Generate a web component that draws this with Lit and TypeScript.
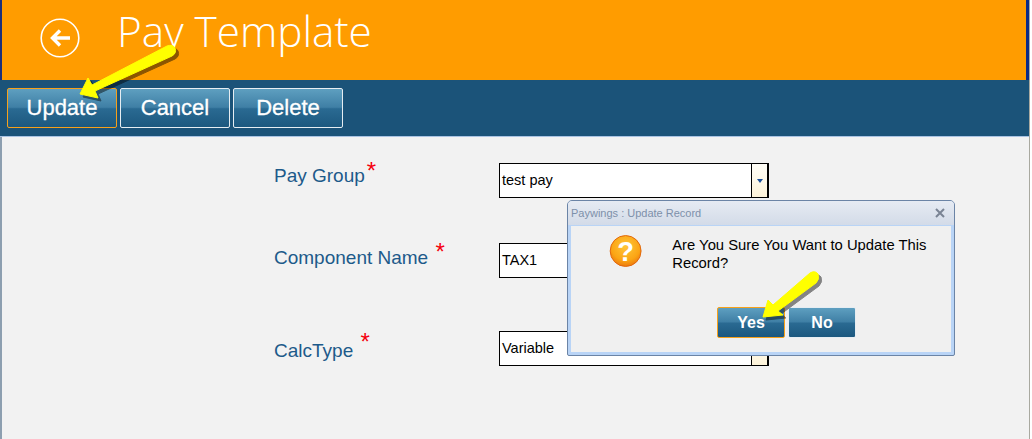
import { LitElement, css, html, svg } from 'lit';
import { customElement } from 'lit/decorators.js';

const arrow = (d: string) => svg`
  <path d=${d} transform="translate(3 3)" fill="#000" opacity="0.45" stroke="#000" stroke-width="1" stroke-linejoin="round" />
  <path d=${d} fill="#ffff00" stroke="#ffff00" stroke-width="1" stroke-linejoin="round" />
`;

@customElement('app-root')
export class AppRoot extends LitElement {
  static styles = css`
    :host {
      display: block;
      position: relative;
      width: 1032px;
      height: 439px;
      overflow: hidden;
      background: #fff;
      font-family: 'Liberation Sans', Arial, sans-serif;
    }

    .page {
      display: flex;
      flex-direction: column;
      width: 1029px;
      height: 439px;
      border-right: 1px solid #a9a9a0;
    }

    .header {
      display: flex;
      height: 80px;
      flex: none;
      box-sizing: border-box;
      padding-left: 38px;
      background: #ff9c00;
      border-left: 2px solid #1b2f7a;
      border-right: 3px solid #0b2a86;
    }

    .back {
      width: 40px;
      height: 40px;
      margin-top: 18px;
    }

    .title {
      margin: 0 0 0 37px;
      font-family: 'Open Sans', sans-serif;
      font-weight: 300;
      font-size: 42.3px;
      line-height: 62px;
      color: #fff;
    }

    .toolbar {
      display: flex;
      gap: 3px;
      height: 57px;
      flex: none;
      box-sizing: border-box;
      padding: 8px 0 0 7px;
      background: #1b5379;
      border-bottom: 1px solid #a9c3e3;
    }

    .btn {
      box-sizing: border-box;
      width: 110px;
      height: 40px;
      padding: 0;
      border: 1px solid #e6edf2;
      border-radius: 2px;
      background: linear-gradient(#5e9fc0 0%, #3f7fa5 48%, #2a6a92 52%, #1c587f 100%);
      color: #fff;
      font: 22px 'Liberation Sans', Arial, sans-serif;
      -webkit-text-stroke: 0.3px #fff;
    }

    .btn.focused {
      border-color: #f7a11a;
    }

    .content {
      flex: 1;
      box-sizing: border-box;
      padding: 26px 0 0 272px;
      background: #f2f2f2;
      border-left: 2px solid #8d9fb0;
    }

    .row {
      display: grid;
      grid-template-columns: 225px 270px;
      height: 35px;
      margin-bottom: 45px;
    }

    .row.wide {
      margin-bottom: 53px;
    }

    .label {
      font-size: 19px;
      line-height: 20px;
      color: #1d5a8a;
      white-space: nowrap;
    }

    .star {
      color: #f5000f;
      font-size: 24px;
      line-height: 16px;
      margin-left: 2px;
    }

    .field {
      display: flex;
      box-sizing: border-box;
      height: 35px;
      border: 1.5px solid #000;
      background: #fff;
    }

    .value {
      flex: 1;
      padding-left: 2px;
      font-size: 14.5px;
      line-height: 32px;
      color: #000;
    }

    .drop {
      display: flex;
      align-items: center;
      justify-content: center;
      width: 15px;
      border-left: 1.5px solid #000;
      border-right: 1px solid #000;
      background: linear-gradient(#fffef8, #fdf3d9);
    }

    .caret {
      width: 0;
      height: 0;
      border: 3px solid transparent;
      border-top: 4px solid #1b4f9a;
      border-bottom: 0;
    }

    .dialog {
      position: absolute;
      left: 567px;
      top: 200px;
      box-sizing: border-box;
      width: 388px;
      height: 156px;
      display: flex;
      flex-direction: column;
      border: 1px solid #6b84a6;
      border-radius: 5px 5px 2px 2px;
      background: #b9d4f6;
    }

    .dialog-title {
      display: flex;
      align-items: center;
      justify-content: space-between;
      height: 24px;
      flex: none;
      padding: 0 9px 0 3px;
      border-radius: 4px 4px 0 0;
      background: linear-gradient(#e6ebf3, #d3dbe8);
      font-size: 11px;
      color: #7d90aa;
    }

    .dialog-close {
      width: 10px;
      height: 10px;
    }

    .dialog-body {
      flex: 1;
      display: flex;
      flex-direction: column;
      margin: 1px 3px 3px;
      background: #f0f0f0;
    }

    .message {
      display: flex;
      height: 81px;
      flex: none;
      padding-left: 38px;
    }

    .question {
      width: 34px;
      height: 34px;
      margin-top: 8px;
    }

    .message p {
      width: 285px;
      margin: 10px 0 0 30px;
      font-size: 14.8px;
      line-height: 18px;
      color: #000;
    }

    .dialog-actions {
      display: flex;
      gap: 3px;
      padding-left: 146px;
    }

    .dialog-actions .btn {
      width: 68px;
      height: 31px;
      font-size: 16px;
      font-weight: bold;
      -webkit-text-stroke: 0;
    }

    .arrows {
      position: absolute;
      left: 0;
      top: 0;
      width: 1032px;
      height: 439px;
      pointer-events: none;
    }
  `;

  fields = [
    { label: 'Pay Group', value: 'test pay', drop: true, star: '', top: 0, lift: 3 },
    { label: 'Component Name', value: 'TAX1', drop: false, star: ' ', top: 1, lift: 4 },
    { label: 'CalcType', value: 'Variable', drop: true, star: ' ', top: 3, lift: 7 },
  ];

  render() {
    return html`
      <div class="page">
        <div class="header">
          <svg class="back" viewBox="0 0 40 40" fill="none" stroke="#fff">
            <circle cx="20" cy="20" r="18.8" stroke-width="1.6" />
            <path d="M30 20H13M20 12.5 12.5 20l7.5 7.5" stroke-width="3.4" />
          </svg>
          <h1 class="title">Pay Template</h1>
        </div>
        <div class="toolbar">
          <button class="btn focused">Update</button>
          <button class="btn">Cancel</button>
          <button class="btn">Delete</button>
        </div>
        <div class="content">
          ${this.fields.map((f, i) => html`
            <div class="row ${i === 1 ? 'wide' : ''}">
              <div class="label" style="padding-top:${f.top}px">${f.label}${f.star}<span class="star" style="vertical-align:${f.lift}px">*</span></div>
              <div class="field">
                <div class="value">${f.value}</div>
                ${f.drop ? html`<div class="drop"><span class="caret"></span></div>` : ''}
              </div>
            </div>
          `)}
        </div>
      </div>

      <div class="dialog">
        <div class="dialog-title">
          <span>Paywings : Update Record</span>
          <svg class="dialog-close" viewBox="0 0 10 10" stroke="#7a8494" stroke-width="2">
            <path d="M1 1l8 8M9 1 1 9" />
          </svg>
        </div>
        <div class="dialog-body">
          <div class="message">
            <svg class="question" viewBox="0 0 34 34">
              <defs>
                <radialGradient id="q" cx="0.5" cy="0.35" r="0.7">
                  <stop offset="0" stop-color="#ffc53a" />
                  <stop offset="0.65" stop-color="#fba514" />
                  <stop offset="1" stop-color="#e9700c" />
                </radialGradient>
              </defs>
              <circle cx="17" cy="17" r="15.8" fill="url(#q)" stroke="#e0660c" stroke-width="1" />
              <text x="17" y="27" text-anchor="middle" font-family="Liberation Sans" font-weight="bold" font-size="28" fill="#fff">?</text>
            </svg>
            <p>Are You Sure You Want to Update This Record?</p>
          </div>
          <div class="dialog-actions">
            <button class="btn focused">Yes</button>
            <button class="btn">No</button>
          </div>
        </div>
      </div>

      <svg class="arrows" viewBox="0 0 1032 439">
        ${arrow('M167 46 Q173 44 175 48 Q177 53 172 56 L95 91 L98 98 L80 94 L88 78 L92 85 Z')}
        ${arrow('M810 273 Q815 270 818 274 Q820 279 816 283 L778 311 L783 315 L763 317 L768 300 L773 305 Z')}
      </svg>
    `;
  }
}
